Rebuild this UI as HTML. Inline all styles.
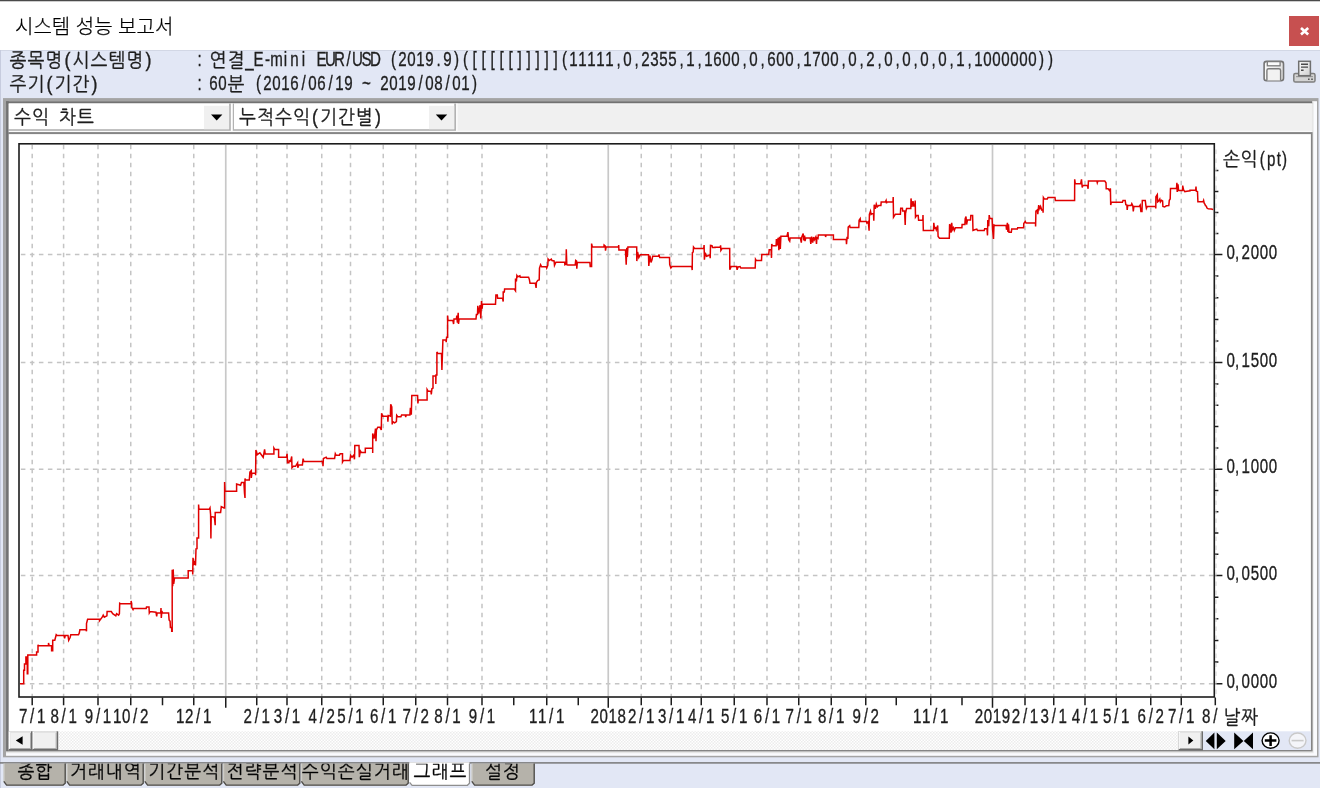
<!DOCTYPE html><html lang="ko"><head><meta charset="utf-8"><title>시스템 성능 보고서</title><style>
html,body{margin:0;padding:0}
body{width:1320px;height:788px;overflow:hidden;position:relative;background:#e2e7f5;font-family:"Liberation Sans","NanumGothic","Noto Sans CJK KR",sans-serif}
div{position:absolute;box-sizing:border-box}
svg{position:absolute;left:0;top:0;will-change:transform}
.m{font-family:"Liberation Sans","NanumGothic","Noto Sans CJK KR",sans-serif;text-anchor:middle;stroke:#1e1e1e;stroke-width:.35px}
#title{will-change:transform;left:15px;top:12.6px;height:28px;line-height:28px;font-size:20px;font-weight:300;-webkit-text-stroke:.25px #000;color:#000;font-family:"Liberation Sans","Noto Sans CJK KR","NanumGothic",sans-serif;white-space:nowrap}
</style></head><body>
<svg width="1320" height="788" viewBox="0 0 1320 788">
<rect x="0" y="0" width="1320" height="50.1" fill="#fff"/>
<rect x="0" y="0" width="1320" height="1" fill="#4a4a4a"/>
<rect x="0" y="1" width="1320" height="1" fill="#cdcdcd"/>
<rect x="1289" y="16" width="30" height="30" fill="#c75050"/>
<rect x="0" y="50.1" width="1320" height="0.9" fill="#d0d5e4"/>
<rect x="0" y="50.1" width="0.9" height="737.9" fill="#c4c9dc"/>
<rect x="3" y="98.1" width="1315.5" height="659.2" fill="#a4a4a4"/>
<rect x="6.05" y="101.2" width="1310.95" height="654.6" fill="#fafbfe"/>
<rect x="6.05" y="101.2" width="1307.55" height="652" fill="#e6e6e6"/>
<rect x="6.05" y="101.2" width="1306.15" height="2.4" fill="#727272"/>
<rect x="6.05" y="101.2" width="2.75" height="650.2" fill="#727272"/>
<rect x="8.8" y="103.6" width="1303.1" height="28.7" fill="#f0f0f0"/>
<rect x="8.8" y="103.6" width="1303.1" height="0.8" fill="#f8f8f8"/>
<rect x="8.8" y="130.8" width="1303.1" height="1.4" fill="#fbfbfb"/>
<rect x="8.8" y="132.1" width="1303.8" height="619.3" fill="#858585"/>
<rect x="8.8" y="134.1" width="1302.1" height="615.9" fill="#fff"/>
<rect x="8.8" y="103.6" width="222.1" height="27.2" fill="#b2b2b2"/>
<rect x="8.8" y="103.6" width="220.3" height="25.6" fill="#fff"/>
<rect x="204" y="105.8" width="25.1" height="23.4" fill="#f0f0f0"/>
<rect x="230.9" y="103.6" width="1.9" height="27.2" fill="#fff"/>
<rect x="232.8" y="103.6" width="1.2" height="27.2" fill="#b2b2b2"/>
<rect x="234" y="103.6" width="222" height="27.2" fill="#b2b2b2"/>
<rect x="234" y="103.6" width="220.2" height="25.6" fill="#fff"/>
<rect x="429" y="105.8" width="25.2" height="23.4" fill="#f0f0f0"/>
<rect x="456" y="103.6" width="1.7" height="27.2" fill="#fafafa"/>
<pattern id="dz" width="3" height="3" patternUnits="userSpaceOnUse"><rect width="3" height="3" fill="#fff"/><rect width="1.5" height="1.5" fill="#ececec"/><rect x="1.5" y="1.5" width="1.5" height="1.5" fill="#ececec"/></pattern>
<rect x="8.8" y="731.3" width="1194.2" height="18.7" fill="url(#dz)"/>
<rect x="1203" y="731.3" width="107.9" height="18.7" fill="#e2e7f5"/>
<rect x="8.8" y="731.3" width="23.8" height="19.1" fill="#6d6d6d"/>
<rect x="8.8" y="731.3" width="22.2" height="17.6" fill="#fff"/>
<rect x="10.1" y="732.6" width="20.9" height="16.3" fill="#a6a6a6"/>
<rect x="10.1" y="732.6" width="20" height="15.4" fill="#f0f0f0"/>
<rect x="32.6" y="731.3" width="25.6" height="19.1" fill="#6d6d6d"/>
<rect x="32.6" y="731.3" width="24" height="17.6" fill="#fff"/>
<rect x="33.9" y="732.6" width="22.7" height="16.3" fill="#a6a6a6"/>
<rect x="33.9" y="732.6" width="21.8" height="15.4" fill="#f0f0f0"/>
<rect x="1178.6" y="731.3" width="24.4" height="19.1" fill="#6d6d6d"/>
<rect x="1178.6" y="731.3" width="22.8" height="17.6" fill="#fff"/>
<rect x="1179.9" y="732.6" width="21.5" height="16.3" fill="#a6a6a6"/>
<rect x="1179.9" y="732.6" width="20.6" height="15.4" fill="#f0f0f0"/>
<rect x="0" y="762.2" width="1320" height="1.4" fill="#707070"/>
<path d="M1301 28 L1308.2 34.4 M1308.2 28 L1301 34.4" stroke="#fff" stroke-width="2.7" fill="none"/>
<clipPath id="ci"><rect x="0" y="50.4" width="1320" height="48"/></clipPath><g clip-path="url(#ci)">
<text class="m" transform="translate(18.0 0) scale(0.92 1)" x="0.00 19.57 39.13 53.80 68.48 88.04 107.61 127.17 141.85" y="66.7" font-size="19.5" fill="#1e1e1e">종목명(시스템명)</text>
<text class="m" transform="translate(199.7 0) scale(0.72 1)" x="0.00" y="66.2" font-size="21" fill="#1e1e1e">:</text>
<text class="m" transform="translate(218.0 0) scale(0.92 1)" x="0.00 19.57" y="66.7" font-size="19.5" fill="#1e1e1e">연결</text><text class="m" transform="translate(249.5 0) scale(0.72 1)" x="0.00 12.50 25.00 37.50 50.00 62.50 75.00 87.50 100.00 112.50 125.00 137.50 150.00 162.50 175.00 187.50 200.00 212.50 225.00 237.50 250.00 262.50 275.00 287.50 300.00 312.50 325.00 337.50 350.00 362.50 375.00 387.50 400.00 412.50 425.00 437.50 450.00 462.50 475.00 487.50 500.00 512.50 525.00 537.50 550.00 562.50 575.00 587.50 600.00 612.50 625.00 637.50 650.00 662.50 675.00 687.50 700.00 712.50 725.00 737.50 750.00 762.50 775.00 787.50 800.00 812.50 825.00 837.50 850.00 862.50 875.00 887.50 900.00 912.50 925.00 937.50 950.00 962.50 975.00 987.50 1000.00 1012.50 1025.00 1037.50 1050.00 1062.50 1075.00 1087.50 1100.00 1112.50" y="66.2" font-size="21" fill="#1e1e1e">_E-mini EUR/USD (2019.9)([[[[[]]]]](11111,0,2355,1,1600,0,600,1700,0,2,0,0,0,0,1,1000000))</text>
<text class="m" transform="translate(18.0 0) scale(0.92 1)" x="0.00 19.57 34.24 48.91 68.48 83.15" y="90.7" font-size="19.5" fill="#1e1e1e">주기(기간)</text>
<text class="m" transform="translate(199.7 0) scale(0.72 1)" x="0.00" y="90.2" font-size="21" fill="#1e1e1e">:</text>
<text class="m" transform="translate(213.5 0) scale(0.72 1)" x="0.00 12.50" y="90.2" font-size="21" fill="#1e1e1e">60</text><text class="m" transform="translate(236.0 0) scale(0.92 1)" x="0.00" y="90.7" font-size="19.5" fill="#1e1e1e">분</text><text class="m" transform="translate(258.5 0) scale(0.72 1)" x="0.00 12.50 25.00 37.50 50.00 62.50 75.00 87.50 100.00 112.50 125.00 137.50 150.00 162.50 175.00 187.50 200.00 212.50 225.00 237.50 250.00 262.50 275.00 287.50 300.00" y="90.2" font-size="21" fill="#1e1e1e">(2016/06/19 ~ 2019/08/01)</text>
</g>
<defs><linearGradient id="gp" x1="0" y1="0" x2="1" y2="1"><stop offset="0" stop-color="#fff"/><stop offset="1" stop-color="#cdcdcd"/></linearGradient><linearGradient id="gs" x1="0" y1="0" x2="1" y2="0"><stop offset="0" stop-color="#fafafa"/><stop offset="1" stop-color="#e2e2e2"/></linearGradient></defs>
<rect x="1264.1" y="61.4" width="19.4" height="19.3" rx="2.4" fill="url(#gs)" stroke="#747474" stroke-width="1.6"/>
<rect x="1267.3" y="61.6" width="12.8" height="4.2" fill="#fbfbfb" stroke="#7c7c7c" stroke-width="1.3"/>
<path d="M1266.9 80.4V70.4q0-1.7 1.7-1.7h10.3q1.7 0 1.7 1.7V80.4" fill="#f2f2f2" stroke="#7c7c7c" stroke-width="1.4"/>
<rect x="1293.8" y="73.4" width="21.2" height="8.6" rx="1.6" fill="#d3d3d3" stroke="#7e7e7e" stroke-width="1.5"/>
<path d="M1296 76.6h17" stroke="#9a9a9a" stroke-width="1.2"/>
<rect x="1298.7" y="61.3" width="11.7" height="14.4" fill="url(#gp)" stroke="#707070" stroke-width="1.5"/>
<path d="M1301 64.2h7M1301 67.1h7M1301 70.3h2.6" stroke="#4a4a4a" stroke-width="1.4"/><path d="M1308 79.2h1.6M1311.2 79.2h1.6" stroke="#555" stroke-width="1.5"/>
<text class="m" transform="translate(22.5 0) scale(0.92 1)" x="0.00 19.57 34.24 48.91 68.48" y="123.9" font-size="19.5" fill="#1e1e1e">수익 차트</text>
<text class="m" transform="translate(247.5 0) scale(0.92 1)" x="0.00 19.57 39.13 58.70 73.37 88.04 107.61 127.17 141.85" y="123.9" font-size="19.5" fill="#1e1e1e">누적수익(기간별)</text>
<path d="M211 114.4h11.4l-5.7 6.2z" fill="#000"/><path d="M435.8 114.4h11.4l-5.7 6.2z" fill="#000"/>
<g stroke="#c4c4c4" stroke-width="1.5" stroke-dasharray="4.5 4.5" fill="none">
<path d="M32.20 144.8V696.4M63.60 144.8V696.4M98.00 144.8V696.4M130.75 144.8V696.4M193.75 144.8V696.4M256.75 144.8V696.4M287.00 144.8V696.4M321.75 144.8V696.4M350.50 144.8V696.4M383.25 144.8V696.4M415.75 144.8V696.4M447.50 144.8V696.4M482.00 144.8V696.4M546.75 144.8V696.4M641.25 144.8V696.4M671.25 144.8V696.4M701.25 144.8V696.4M734.25 144.8V696.4M767.00 144.8V696.4M798.75 144.8V696.4M831.25 144.8V696.4M865.75 144.8V696.4M930.75 144.8V696.4M1025.00 144.8V696.4M1053.75 144.8V696.4M1085.00 144.8V696.4M1116.25 144.8V696.4M1150.75 144.8V696.4M1181.25 144.8V696.4"/>
<path d="M1213.4 254.5H19.5M1213.4 362.6H19.5M1213.4 469.3H19.5M1213.4 575.6H19.5M1213.4 683.7H19.5"/>
</g>
<path d="M225.75 145V696M608.25 145V696M992.50 145V696" stroke="#c8c8c8" stroke-width="1.7" fill="none"/>
<polyline fill="none" stroke="#e00000" stroke-width="1.5" stroke-linejoin="miter" points="19.9,683.8 23.7,683.8 23.7,670.3 24.5,670.3 24.5,664.0 25.9,664.0 25.9,657.0 27.3,657.0 27.3,673.8 27.8,673.8 27.8,654.9 36.6,654.9 36.6,652.1 38.0,652.1 38.0,644.7 38.5,645.8 48.5,645.8 48.5,643.0 49.2,645.8 51.6,645.8 51.6,650.7 52.7,650.7 52.7,640.3 54.8,640.3 56.2,634.7 56.9,635.4 63.9,635.4 64.6,638.2 65.3,635.4 68.0,635.4 68.7,640.3 70.1,637.5 70.8,634.7 78.5,634.7 79.2,633.3 79.9,629.8 85.9,629.8 86.5,631.2 86.5,623.5 87.6,619.3 99.5,619.3 99.5,620.7 102.2,617.2 103.2,615.1 104.3,617.2 106.9,615.8 107.1,611.6 111.3,611.6 112.7,613.7 115.8,615.8 116.6,613.7 118.6,615.1 119.4,613.7 119.7,603.3 120.5,603.7 131.1,603.7 131.1,600.9 131.7,603.7 131.7,607.4 133.0,609.5 133.4,608.4 146.2,608.4 146.5,607.0 149.0,607.0 149.3,613.0 150.1,611.6 156.0,612.3 156.7,616.5 157.1,613.0 160.7,613.0 161.0,608.1 161.3,617.9 161.9,610.9 162.4,613.0 168.6,613.0 169.1,619.9 170.1,621.2 170.4,627.5 171.7,627.5 171.7,631.3 172.2,631.3 172.2,569.8 172.7,586.3 173.2,569.4 173.7,583.8 174.5,578.1 188.2,578.1 188.2,570.8 192.7,570.8 192.7,574.5 193.0,557.8 194.0,563.5 195.0,561.6 195.5,565.4 196.0,548.9 197.0,548.6 197.0,540.0 197.0,545.0 197.0,537.9 198.6,537.9 198.6,504.6 198.9,509.3 209.3,509.3 210.0,507.9 210.6,514.6 210.9,538.6 211.2,516.6 214.4,517.2 215.2,525.2 215.2,512.6 220.6,512.6 221.3,506.6 224.0,507.9 224.6,507.9 224.6,482.0 225.0,491.3 236.6,491.3 236.6,484.0 240.6,485.3 241.5,482.6 243.9,482.6 244.5,493.3 245.0,497.9 245.0,478.6 245.5,480.0 249.3,480.0 249.9,472.0 251.3,470.6 251.3,478.0 251.9,473.3 255.6,473.3 255.6,475.3 255.9,450.0 257.2,454.7 259.9,452.7 263.2,457.3 264.6,449.3 265.2,454.0 273.9,454.0 273.9,448.0 274.8,449.6 278.6,449.6 278.6,457.3 286.5,457.0 287.1,453.8 287.5,462.8 288.9,462.8 289.2,460.7 290.6,461.4 291.7,456.5 292.0,467.7 293.4,466.3 295.5,466.3 297.6,462.8 297.8,467.7 298.7,464.9 302.4,464.9 303.1,458.6 303.8,461.4 322.7,461.4 323.0,466.3 323.4,458.6 326.2,457.2 326.9,458.6 334.6,458.6 335.3,453.8 336.0,455.2 339.4,455.2 340.1,453.8 342.5,453.8 342.5,462.1 343.4,460.5 349.9,460.5 350.6,455.4 352.0,457.2 353.7,455.2 354.5,459.3 354.8,445.4 359.0,445.4 359.3,457.2 360.4,451.0 361.5,452.6 365.3,452.6 365.3,448.2 372.7,448.2 372.7,453.1 372.7,433.5 374.3,438.4 375.5,428.6 376.0,441.2 376.4,430.0 377.8,427.2 379.9,427.2 381.3,430.0 381.6,413.3 382.7,416.3 387.6,416.3 387.9,421.6 388.3,415.4 390.4,416.1 390.7,404.2 391.8,407.0 392.2,424.4 392.8,421.6 394.6,422.8 396.4,421.6 396.7,415.4 397.8,416.8 400.9,416.8 401.6,414.9 405.3,414.9 405.7,417.2 406.2,414.9 409.9,414.9 410.4,407.7 411.3,414.7 411.8,395.4 417.6,395.4 417.9,403.5 418.3,400.0 427.1,400.0 427.1,389.5 428.1,391.2 430.9,391.2 431.3,394.4 431.9,388.8 433.0,388.1 433.0,375.9 435.8,375.9 435.8,384.0 436.0,374.9 436.9,374.9 436.9,370.0 436.9,360.0 436.9,351.9 437.8,353.6 441.5,353.6 441.9,370.1 442.9,340.0 445.9,340.0 446.2,342.1 446.6,337.2 447.6,337.2 447.6,315.6 448.0,320.5 452.9,320.5 453.6,324.0 454.0,319.1 456.4,319.1 456.8,315.6 457.4,322.6 458.2,312.8 458.5,324.0 459.1,319.1 476.0,319.1 476.4,314.5 477.5,314.5 477.8,305.8 478.6,313.5 480.1,305.1 480.8,318.4 481.5,301.0 482.2,308.6 482.5,304.2 495.5,304.2 495.9,294.9 497.3,294.9 497.6,298.2 502.5,298.2 503.2,301.6 503.2,291.9 504.3,291.9 504.6,289.1 514.3,289.1 515.5,290.8 515.5,278.6 516.4,281.4 516.9,275.4 517.8,276.8 519.9,275.8 520.2,277.2 528.6,277.2 529.4,279.6 530.0,283.2 535.3,283.2 536.1,288.0 536.4,282.4 537.8,280.4 539.2,280.0 539.5,268.1 540.6,264.7 541.6,266.8 546.2,266.8 546.7,268.1 547.8,265.4 548.1,259.1 549.2,260.5 551.3,259.1 552.0,260.5 554.1,260.9 554.5,265.4 555.9,262.3 564.6,262.3 564.9,264.7 566.0,264.0 566.3,249.2 566.8,264.7 567.8,265.0 575.2,265.0 575.7,260.4 576.6,261.1 576.8,268.7 577.3,262.5 589.9,262.5 590.2,266.6 591.6,266.6 591.6,243.6 592.4,247.1 603.9,247.1 604.1,245.0 605.3,246.0 605.5,250.6 606.1,247.1 618.5,247.1 618.7,245.0 618.9,249.9 625.5,249.9 626.2,264.6 626.8,247.8 627.3,256.9 627.9,247.1 636.7,247.1 636.8,261.1 637.6,252.0 638.8,257.6 640.2,254.8 648.5,254.8 648.8,266.0 649.9,255.5 651.0,262.5 652.0,259.7 652.7,256.2 658.6,256.2 659.0,254.4 659.7,257.6 669.5,257.6 669.7,264.6 670.9,268.0 672.0,266.6 691.8,266.6 692.2,270.1 692.4,252.7 693.2,252.0 693.5,247.1 694.6,248.5 703.7,248.5 704.1,245.0 704.4,259.7 705.2,252.7 706.5,256.2 708.6,255.5 709.9,254.8 710.2,258.3 710.5,245.4 712.0,245.7 712.5,247.4 715.0,247.4 715.0,247.2 720.3,247.2 720.6,245.4 720.9,250.3 722.0,248.5 729.7,248.5 729.8,269.8 731.1,266.6 736.6,266.6 737.1,269.8 738.0,267.0 740.1,266.6 740.8,268.0 755.2,268.0 755.5,259.3 756.2,260.5 761.5,260.5 761.8,254.5 768.7,254.5 769.2,249.8 771.1,249.8 771.5,257.9 771.7,244.0 772.5,245.7 776.1,245.7 776.4,239.1 777.5,245.4 778.1,237.7 778.9,250.3 779.5,236.7 780.3,248.9 780.9,236.3 786.9,236.3 787.9,232.1 788.7,239.8 789.7,241.2 790.1,238.1 800.4,238.1 801.3,242.6 801.8,237.0 803.2,233.5 803.8,240.5 804.6,235.6 805.0,241.2 805.7,238.1 810.2,238.1 810.8,244.0 811.6,236.7 812.7,242.6 813.6,237.0 814.4,239.8 815.8,237.0 816.5,244.0 816.9,237.7 818.0,238.4 818.3,234.9 825.3,234.9 825.6,237.0 826.1,234.9 833.4,234.9 833.4,239.5 846.2,239.5 846.5,244.3 847.1,236.7 847.9,239.1 848.2,227.2 849.7,225.8 850.1,227.5 858.8,227.5 859.1,220.3 860.2,218.6 860.5,221.6 866.5,221.6 866.9,223.0 868.3,221.6 869.1,230.7 869.4,214.4 870.5,211.2 871.1,214.4 872.1,213.7 873.5,213.7 873.8,220.7 874.2,204.7 875.3,208.9 876.3,204.0 877.3,206.8 878.7,205.4 880.9,205.4 881.2,201.9 885.4,201.9 886.1,200.5 886.5,203.3 887.0,201.9 893.0,201.9 893.2,197.0 893.5,217.2 894.8,215.1 895.4,214.2 900.4,214.2 900.7,208.2 902.4,208.2 902.7,211.0 904.6,211.0 905.2,224.9 905.5,213.7 906.0,211.0 906.6,208.6 910.8,208.6 911.0,198.4 911.9,206.8 913.0,201.2 913.8,206.1 914.9,206.1 915.2,200.5 915.5,217.2 916.6,215.6 918.2,215.6 918.6,220.3 922.8,220.3 923.0,215.1 923.3,230.5 933.5,230.5 933.8,222.8 934.5,228.4 935.6,227.7 936.3,229.8 937.7,225.6 938.1,236.5 939.5,238.2 949.3,238.2 949.6,224.2 950.3,225.6 951.0,232.6 951.7,222.8 952.4,229.8 953.5,227.7 954.3,230.5 955.4,227.7 961.9,227.7 962.1,224.5 964.9,224.5 965.2,218.6 966.0,216.5 966.6,224.5 967.4,220.0 970.5,220.0 970.8,215.6 972.6,215.6 973.0,230.5 974.7,229.8 976.8,229.1 977.5,230.5 984.2,230.5 984.7,228.7 987.0,228.7 987.5,235.4 987.8,220.0 988.7,226.3 989.2,215.1 989.8,218.4 992.1,218.4 992.6,229.8 993.5,238.9 994.0,224.9 995.4,225.6 1006.1,225.6 1006.5,229.8 1007.4,222.8 1007.9,231.9 1008.5,224.2 1009.0,232.3 1011.3,232.3 1011.7,229.1 1017.3,229.1 1017.7,227.7 1023.6,227.7 1023.8,223.5 1025.2,221.4 1026.1,223.1 1027.0,223.1 1030.6,222.9 1035.5,222.9 1035.6,226.5 1035.9,211.1 1037.3,210.0 1037.8,214.2 1038.7,205.1 1039.8,208.6 1040.6,206.5 1041.8,210.0 1042.9,209.7 1043.1,212.8 1043.4,197.5 1044.3,198.9 1047.3,198.9 1048.0,197.5 1055.0,197.5 1055.4,200.5 1074.6,200.5 1074.7,179.3 1075.3,183.8 1080.6,183.8 1081.5,179.3 1082.2,187.4 1082.9,185.6 1087.5,185.6 1088.1,188.8 1088.4,181.0 1096.9,181.0 1097.3,182.8 1097.9,181.0 1104.8,181.0 1106.0,182.8 1106.2,188.8 1108.1,188.8 1109.5,190.5 1110.4,188.4 1110.7,205.1 1111.3,202.3 1122.4,202.3 1123.0,200.5 1125.2,200.5 1125.8,204.7 1126.9,205.1 1127.2,210.0 1127.7,205.6 1131.1,205.6 1131.8,203.7 1132.8,205.8 1133.3,211.4 1133.9,206.5 1139.2,206.5 1140.2,205.1 1140.9,211.4 1142.0,211.4 1142.3,200.5 1145.3,200.5 1145.9,205.6 1146.4,208.4 1147.3,206.5 1155.5,206.5 1155.8,208.4 1155.9,196.8 1157.3,194.7 1157.6,201.9 1158.7,201.0 1159.8,199.1 1160.4,201.9 1161.5,200.3 1162.6,201.0 1162.9,206.5 1164.6,207.0 1166.3,205.8 1168.8,205.6 1169.3,200.3 1170.2,198.9 1170.5,188.4 1176.5,188.4 1176.9,182.8 1177.2,191.9 1178.0,184.2 1178.6,190.5 1182.5,190.5 1182.7,185.6 1183.6,189.8 1184.8,191.6 1186.9,191.2 1190.0,190.8 1190.0,190.2 1195.7,190.2 1196.0,186.6 1196.3,191.1 1197.5,191.5 1197.9,201.7 1203.1,201.7 1203.6,200.4 1204.2,203.1 1205.0,204.4 1205.5,205.7 1206.4,206.2 1206.8,207.9 1208.2,208.8 1211.3,209.0 1213.2,209.5"/>
<rect x="19.00" y="143.80" width="1195.30" height="553.20" fill="none" stroke="#1c1c1c" stroke-width="1.6"/>
<path d="M32.20 697.4V705.2M63.60 697.4V705.2M98.00 697.4V705.2M130.75 697.4V705.2M193.75 697.4V705.2M256.75 697.4V705.2M287.00 697.4V705.2M321.75 697.4V705.2M350.50 697.4V705.2M383.25 697.4V705.2M415.75 697.4V705.2M447.50 697.4V705.2M482.00 697.4V705.2M546.75 697.4V705.2M608.25 697.4V707.8M641.25 697.4V705.2M671.25 697.4V705.2M701.25 697.4V705.2M734.25 697.4V705.2M767.00 697.4V705.2M798.75 697.4V705.2M831.25 697.4V705.2M865.75 697.4V705.2M930.75 697.4V705.2M992.50 697.4V707.8M1025.00 697.4V705.2M1053.75 697.4V705.2M1085.00 697.4V705.2M1116.25 697.4V705.2M1150.75 697.4V705.2M1181.25 697.4V705.2M1215.30 697.4V705.2M162.50 697.4V705.2M225.75 697.4V707.8M513.75 697.4V705.2M578.25 697.4V705.2M896.25 697.4V705.2M962.00 697.4V705.2M1215 254.5H1222.4M1215 362.6H1222.4M1215 469.3H1222.4M1215 575.6H1222.4M1215 683.7H1222.4M1215 276.1H1218.4M1215 297.7H1218.4M1215 319.4H1218.4M1215 341.0H1218.4M1215 383.9H1218.4M1215 405.3H1218.4M1215 426.6H1218.4M1215 448.0H1218.4M1215 490.6H1218.4M1215 511.8H1218.4M1215 533.1H1218.4M1215 554.3H1218.4M1215 597.2H1218.4M1215 618.8H1218.4M1215 640.5H1218.4M1215 662.1H1218.4M1215 233.5H1218.4M1215 212.5H1218.4M1215 191.5H1218.4M1215 170.5H1218.4" stroke="#1c1c1c" stroke-width="1.5" fill="none"/>
<path d="M1215.9 149.5V696" stroke="#cfcfcf" stroke-width="1.2" stroke-dasharray="4.5 4.5"/>
<text class="m" transform="translate(23.2 0) scale(0.72 1)" x="0.00 12.50 25.00" y="723.1" font-size="21" fill="#1e1e1e">7/1</text>
<text class="m" transform="translate(54.6 0) scale(0.72 1)" x="0.00 12.50 25.00" y="723.1" font-size="21" fill="#1e1e1e">8/1</text>
<text class="m" transform="translate(89.0 0) scale(0.72 1)" x="0.00 12.50 25.00" y="723.1" font-size="21" fill="#1e1e1e">9/1</text>
<text class="m" transform="translate(117.2 0) scale(0.72 1)" x="0.00 12.50 25.00 37.50" y="723.1" font-size="21" fill="#1e1e1e">10/2</text>
<text class="m" transform="translate(180.2 0) scale(0.72 1)" x="0.00 12.50 25.00 37.50" y="723.1" font-size="21" fill="#1e1e1e">12/1</text>
<text class="m" transform="translate(247.8 0) scale(0.72 1)" x="0.00 12.50 25.00" y="723.1" font-size="21" fill="#1e1e1e">2/1</text>
<text class="m" transform="translate(278.0 0) scale(0.72 1)" x="0.00 12.50 25.00" y="723.1" font-size="21" fill="#1e1e1e">3/1</text>
<text class="m" transform="translate(312.8 0) scale(0.72 1)" x="0.00 12.50 25.00" y="723.1" font-size="21" fill="#1e1e1e">4/2</text>
<text class="m" transform="translate(341.5 0) scale(0.72 1)" x="0.00 12.50 25.00" y="723.1" font-size="21" fill="#1e1e1e">5/1</text>
<text class="m" transform="translate(374.2 0) scale(0.72 1)" x="0.00 12.50 25.00" y="723.1" font-size="21" fill="#1e1e1e">6/1</text>
<text class="m" transform="translate(406.8 0) scale(0.72 1)" x="0.00 12.50 25.00" y="723.1" font-size="21" fill="#1e1e1e">7/2</text>
<text class="m" transform="translate(438.5 0) scale(0.72 1)" x="0.00 12.50 25.00" y="723.1" font-size="21" fill="#1e1e1e">8/1</text>
<text class="m" transform="translate(473.0 0) scale(0.72 1)" x="0.00 12.50 25.00" y="723.1" font-size="21" fill="#1e1e1e">9/1</text>
<text class="m" transform="translate(533.2 0) scale(0.72 1)" x="0.00 12.50 25.00 37.50" y="723.1" font-size="21" fill="#1e1e1e">11/1</text>
<text class="m" transform="translate(594.8 0) scale(0.72 1)" x="0.00 12.50 25.00 37.50" y="723.1" font-size="21" fill="#1e1e1e">2018</text>
<text class="m" transform="translate(632.2 0) scale(0.72 1)" x="0.00 12.50 25.00" y="723.1" font-size="21" fill="#1e1e1e">2/1</text>
<text class="m" transform="translate(662.2 0) scale(0.72 1)" x="0.00 12.50 25.00" y="723.1" font-size="21" fill="#1e1e1e">3/1</text>
<text class="m" transform="translate(692.2 0) scale(0.72 1)" x="0.00 12.50 25.00" y="723.1" font-size="21" fill="#1e1e1e">4/1</text>
<text class="m" transform="translate(725.2 0) scale(0.72 1)" x="0.00 12.50 25.00" y="723.1" font-size="21" fill="#1e1e1e">5/1</text>
<text class="m" transform="translate(758.0 0) scale(0.72 1)" x="0.00 12.50 25.00" y="723.1" font-size="21" fill="#1e1e1e">6/1</text>
<text class="m" transform="translate(789.8 0) scale(0.72 1)" x="0.00 12.50 25.00" y="723.1" font-size="21" fill="#1e1e1e">7/1</text>
<text class="m" transform="translate(822.2 0) scale(0.72 1)" x="0.00 12.50 25.00" y="723.1" font-size="21" fill="#1e1e1e">8/1</text>
<text class="m" transform="translate(856.8 0) scale(0.72 1)" x="0.00 12.50 25.00" y="723.1" font-size="21" fill="#1e1e1e">9/2</text>
<text class="m" transform="translate(917.2 0) scale(0.72 1)" x="0.00 12.50 25.00 37.50" y="723.1" font-size="21" fill="#1e1e1e">11/1</text>
<text class="m" transform="translate(979.0 0) scale(0.72 1)" x="0.00 12.50 25.00 37.50" y="723.1" font-size="21" fill="#1e1e1e">2019</text>
<text class="m" transform="translate(1016.0 0) scale(0.72 1)" x="0.00 12.50 25.00" y="723.1" font-size="21" fill="#1e1e1e">2/1</text>
<text class="m" transform="translate(1044.8 0) scale(0.72 1)" x="0.00 12.50 25.00" y="723.1" font-size="21" fill="#1e1e1e">3/1</text>
<text class="m" transform="translate(1076.0 0) scale(0.72 1)" x="0.00 12.50 25.00" y="723.1" font-size="21" fill="#1e1e1e">4/1</text>
<text class="m" transform="translate(1107.2 0) scale(0.72 1)" x="0.00 12.50 25.00" y="723.1" font-size="21" fill="#1e1e1e">5/1</text>
<text class="m" transform="translate(1141.8 0) scale(0.72 1)" x="0.00 12.50 25.00" y="723.1" font-size="21" fill="#1e1e1e">6/2</text>
<text class="m" transform="translate(1172.2 0) scale(0.72 1)" x="0.00 12.50 25.00" y="723.1" font-size="21" fill="#1e1e1e">7/1</text>
<text class="m" transform="translate(1206.3 0) scale(0.72 1)" x="0.00 12.50 25.00" y="723.1" font-size="21" fill="#1e1e1e">8/1</text>
<rect x="1220.2" y="706" width="41" height="22" fill="#fff"/>
<text class="m" transform="translate(1231.6 0) scale(0.92 1)" x="0.00 19.57" y="723.7" font-size="19.5" fill="#1e1e1e">날짜</text>
<text class="m" transform="translate(1230.7 0) scale(0.72 1)" x="0.00 8.75 20.83 33.61 46.25 58.75" y="258.6" font-size="21" fill="#1e1e1e">0,2000</text>
<text class="m" transform="translate(1230.7 0) scale(0.72 1)" x="0.00 8.75 20.83 33.61 46.25 58.75" y="366.7" font-size="21" fill="#1e1e1e">0,1500</text>
<text class="m" transform="translate(1230.7 0) scale(0.72 1)" x="0.00 8.75 20.83 33.61 46.25 58.75" y="473.4" font-size="21" fill="#1e1e1e">0,1000</text>
<text class="m" transform="translate(1230.7 0) scale(0.72 1)" x="0.00 8.75 20.83 33.61 46.25 58.75" y="579.7" font-size="21" fill="#1e1e1e">0,0500</text>
<text class="m" transform="translate(1230.7 0) scale(0.72 1)" x="0.00 8.75 20.83 33.61 46.25 58.75" y="687.8" font-size="21" fill="#1e1e1e">0,0000</text>
<text class="m" transform="translate(1231.5 0) scale(0.92 1)" x="0.00 19.02" y="166.1" font-size="19.5" fill="#1e1e1e">손익</text><text class="m" transform="translate(1262.3 0) scale(0.72 1)" x="0.00 12.36 22.92 30.83" y="165.6" font-size="21" fill="#1e1e1e">(pt)</text>
<path d="M22.6 736.2v8.6l-6.8-4.3z" fill="#000"/><path d="M1188.4 736.6v7.8l4.9-3.9z" fill="#000"/>
<path d="M1205.8 740.9l8.6-8.3v16.6zM1225.7 740.9l-8.9-8.3v16.6z" fill="#000"/>
<path d="M1234.2 732.6l9.2 8.3-9.2 8.3zM1253 732.6l-9.2 8.3 9.2 8.3z" fill="#000"/>
<ellipse cx="1270.6" cy="740.6" rx="8.5" ry="7.7" fill="#fff" stroke="#000" stroke-width="1.4"/><path d="M1264.8 740.6h11.6M1270.6 735.2v10.8" stroke="#000" stroke-width="2.5"/>
<ellipse cx="1297.6" cy="740.6" rx="8.4" ry="7.6" fill="#f4f5f9" stroke="#c9c9c9" stroke-width="1.4"/><path d="M1291.6 740.6h12" stroke="#c9c9c9" stroke-width="1.6"/>
<path d="M3.6 763.5V781.6L6.5 785.4H63.2L65.3 783.4V763.5Z" fill="#b5b2aa"/>
<path d="M3.8 781.4L6.6 785.1H63.1L65.2 783.2V763.5" fill="none" stroke="#504e4a" stroke-width="1.4"/>
<path d="M4.1 763.6V781" fill="none" stroke="#d2d0ca" stroke-width="1"/>
<path d="M66.6 763.5V781.6L69.5 785.4H141.2L143.3 783.4V763.5Z" fill="#b5b2aa"/>
<path d="M66.8 781.4L69.6 785.1H141.1L143.2 783.2V763.5" fill="none" stroke="#504e4a" stroke-width="1.4"/>
<path d="M67.1 763.6V781" fill="none" stroke="#d2d0ca" stroke-width="1"/>
<path d="M144.6 763.5V781.6L147.5 785.4H219.8L221.9 783.4V763.5Z" fill="#b5b2aa"/>
<path d="M144.8 781.4L147.6 785.1H219.7L221.8 783.2V763.5" fill="none" stroke="#504e4a" stroke-width="1.4"/>
<path d="M145.1 763.6V781" fill="none" stroke="#d2d0ca" stroke-width="1"/>
<path d="M223.2 763.5V781.6L226.1 785.4H297.8L299.9 783.4V763.5Z" fill="#b5b2aa"/>
<path d="M223.4 781.4L226.2 785.1H297.7L299.8 783.2V763.5" fill="none" stroke="#504e4a" stroke-width="1.4"/>
<path d="M223.7 763.6V781" fill="none" stroke="#d2d0ca" stroke-width="1"/>
<path d="M301.2 763.5V781.6L304.1 785.4H406.2L408.3 783.4V763.5Z" fill="#b5b2aa"/>
<path d="M301.4 781.4L304.2 785.1H406.1L408.2 783.2V763.5" fill="none" stroke="#504e4a" stroke-width="1.4"/>
<path d="M301.7 763.6V781" fill="none" stroke="#d2d0ca" stroke-width="1"/>
<path d="M409.3 762.2V782.6L411.9 785.6H467.4L469.5 783.4V762.2Z" fill="#fff"/>
<path d="M409.6 782.4L412.1 785.3H467.4L469.5 783.2V763.4" fill="none" stroke="#8e8e8e" stroke-width="1.3"/>
<path d="M471.6 763.5V781.6L474.5 785.4H532.2L534.3 783.4V763.5Z" fill="#b5b2aa"/>
<path d="M471.8 781.4L474.6 785.1H532.1L534.2 783.2V763.5" fill="none" stroke="#504e4a" stroke-width="1.4"/>
<path d="M472.1 763.6V781" fill="none" stroke="#d2d0ca" stroke-width="1"/>
<clipPath id="ct"><rect x="0" y="763.7" width="1320" height="25"/></clipPath><g clip-path="url(#ct)">
<text class="m" transform="translate(25.8 0) scale(0.92 1)" x="0.00 19.57" y="778.1" font-size="19.5" fill="#000">종합</text>
<text class="m" transform="translate(78.3 0) scale(0.92 1)" x="0.00 19.57 39.13 58.70" y="778.1" font-size="19.5" fill="#000">거래내역</text>
<text class="m" transform="translate(156.6 0) scale(0.92 1)" x="0.00 19.57 39.13 58.70" y="778.1" font-size="19.5" fill="#000">기간분석</text>
<text class="m" transform="translate(234.9 0) scale(0.92 1)" x="0.00 19.57 39.13 58.70" y="778.1" font-size="19.5" fill="#000">전략분석</text>
<text class="m" transform="translate(310.1 0) scale(0.92 1)" x="0.00 19.57 39.13 58.70 78.26 97.83" y="778.1" font-size="19.5" fill="#000">수익손실거래</text>
<text class="m" transform="translate(421.9 0) scale(0.92 1)" x="0.00 19.57 39.13" y="778.1" font-size="19.5" fill="#000">그래프</text>
<text class="m" transform="translate(493.3 0) scale(0.92 1)" x="0.00 19.57" y="778.1" font-size="19.5" fill="#000">설정</text>
</g>
</svg>
<div id="title">시스템 성능 보고서</div>
</body></html>
